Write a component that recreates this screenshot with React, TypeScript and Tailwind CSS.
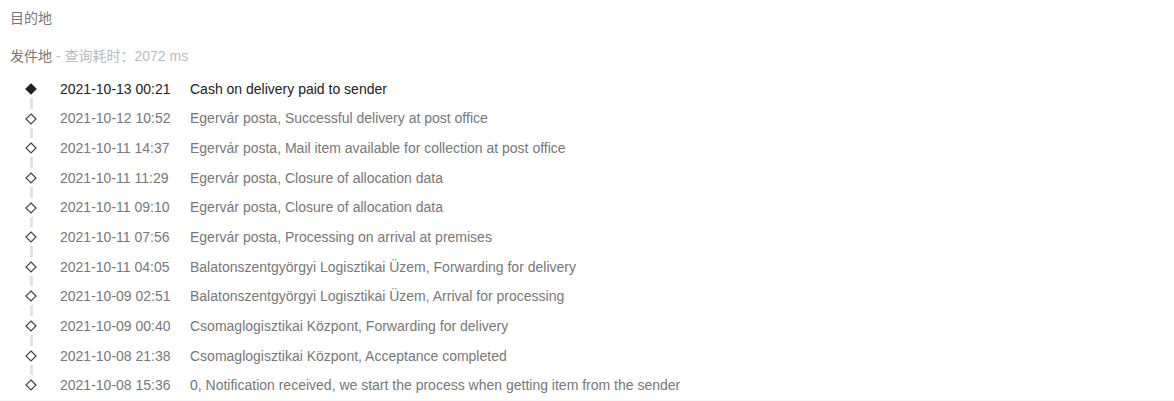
import React from "react";

const events = [
  ["2021-10-13 00:21", "Cash on delivery paid to sender"],
  ["2021-10-12 10:52", "Egervár posta, Successful delivery at post office"],
  ["2021-10-11 14:37", "Egervár posta, Mail item available for collection at post office"],
  ["2021-10-11 11:29", "Egervár posta, Closure of allocation data"],
  ["2021-10-11 09:10", "Egervár posta, Closure of allocation data"],
  ["2021-10-11 07:56", "Egervár posta, Processing on arrival at premises"],
  ["2021-10-11 04:05", "Balatonszentgyörgyi Logisztikai Üzem, Forwarding for delivery"],
  ["2021-10-09 02:51", "Balatonszentgyörgyi Logisztikai Üzem, Arrival for processing"],
  ["2021-10-09 00:40", "Csomaglogisztikai Központ, Forwarding for delivery"],
  ["2021-10-08 21:38", "Csomaglogisztikai Központ, Acceptance completed"],
  ["2021-10-08 15:36", "0, Notification received, we start the process when getting item from the sender"],
];

function Marker({ filled }: { filled: boolean }) {
  return (
    <svg width="12" height="12" viewBox="0 0 12 12" className="block shrink-0" aria-hidden="true">
      <path d="M6 1 11 6 6 11 1 6Z" fill={filled ? "#222" : "#fff"} stroke={filled ? "#222" : "#444"} strokeWidth="1.2" />
    </svg>
  );
}

export default function App() {
  return (
    <main className="border-b border-[#f7f7f7] bg-white font-['Liberation_Sans','Noto_Sans_CJK_SC',sans-serif] text-sm leading-5 text-[#777]">
      <div className="px-2.5 pt-2">
        <h2>目的地</h2>
        <h2 className="mt-[18px]">
          发件地<span className="text-[#bbb]"> - 查询耗时：2072 ms</span>
        </h2>
        <ol className="mt-2 grid h-[326px] auto-rows-fr">
          {events.map(([time, text], i) => (
            <li key={time} className={i === 0 ? "flex items-stretch text-[#222]" : "flex items-stretch"}>
              <div className="flex w-[50px] flex-col items-center pt-[9px] pr-2">
                <Marker filled={i === 0} />
                {i < events.length - 1 && <span className="mt-[3px] -mb-[5px] w-[3px] flex-1 bg-[#e2e2e2]" />}
              </div>
              <time className="w-[130px] self-center">{time}</time>
              <p className="self-center">{text}</p>
            </li>
          ))}
        </ol>
      </div>
    </main>
  );
}
